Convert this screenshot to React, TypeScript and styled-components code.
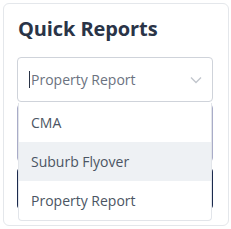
import React from "react";
import styled, { createGlobalStyle } from "styled-components";

const GlobalStyle = createGlobalStyle`
  html, body {
    margin: 0;
    padding: 0;
    background: #ffffff;
    font-family: "Open Sans", "Noto Sans", sans-serif;
  }
`;

const Card = styled.div`
  box-sizing: border-box;
  margin: 3px;
  width: 226px;
  height: 223px;
  border: 1px solid #e4e7eb;
  border-radius: 6px;
  padding: 12px 15px 0 13px;
  background: #fff;
`;

const Title = styled.h2`
  margin: 0 0 15px 1px;
  font-size: 20px;
  line-height: 26px;
  font-weight: 700;
  letter-spacing: -0.1px;
  color: #2a3447;
`;

const Field = styled.div`
  position: relative;
`;

const SelectBox = styled.div`
  box-sizing: border-box;
  height: 45px;
  border: 1px solid #cfd3da;
  border-radius: 4px;
  display: flex;
  align-items: center;
  justify-content: space-between;
  padding: 0 10px 0 12px;
`;

const Value = styled.span`
  position: relative;
  font-size: 14px;
  color: #6b7280;
  padding-left: 1px;
`;

const Caret = styled.span`
  position: absolute;
  left: -1px;
  top: 1px;
  width: 1px;
  height: 17px;
  background: #2a3447;
`;

const Input = styled.div`
  box-sizing: border-box;
  height: 58px;
  margin-top: 2px;
  border: 1px solid #a9acc8;
  border-radius: 4px;
`;

const Button = styled.div`
  height: 41px;
  margin-top: 6px;
  background: #1b2a4e;
  border-radius: 4px;
`;

const Menu = styled.ul`
  position: absolute;
  top: 46px;
  left: 1px;
  right: 1px;
  margin: 0;
  padding: 0;
  list-style: none;
  background: #fff;
  border: 1px solid #e2e5ea;
  border-top: none;
  border-radius: 0 0 4px 4px;
`;

const Item = styled.li<{ $active?: boolean }>`
  height: 39px;
  display: flex;
  align-items: center;
  padding-left: 12px;
  font-size: 14px;
  color: #4b5563;
  background: ${(p) => (p.$active ? "#eef1f4" : "transparent")};
`;

const Chevron = () => (
  <svg width="12" height="8" viewBox="0 0 12 8" fill="none">
    <path d="M1 1.5 L6 6.5 L11 1.5" stroke="#c2c6cd" strokeWidth="1.4" />
  </svg>
);

const options = ["CMA", "Suburb Flyover", "Property Report"];

const App: React.FC = () => {
  return (
    <>
      <GlobalStyle />
      <Card>
        <Title>Quick Reports</Title>
        <Field>
          <SelectBox>
            <Value>
              <Caret />
              Property Report
            </Value>
            <Chevron />
          </SelectBox>
          <Input />
          <Button />
          <Menu>
            {options.map((o) => (
              <Item key={o} $active={o === "Suburb Flyover"}>
                {o}
              </Item>
            ))}
          </Menu>
        </Field>
      </Card>
    </>
  );
};

export default App;
